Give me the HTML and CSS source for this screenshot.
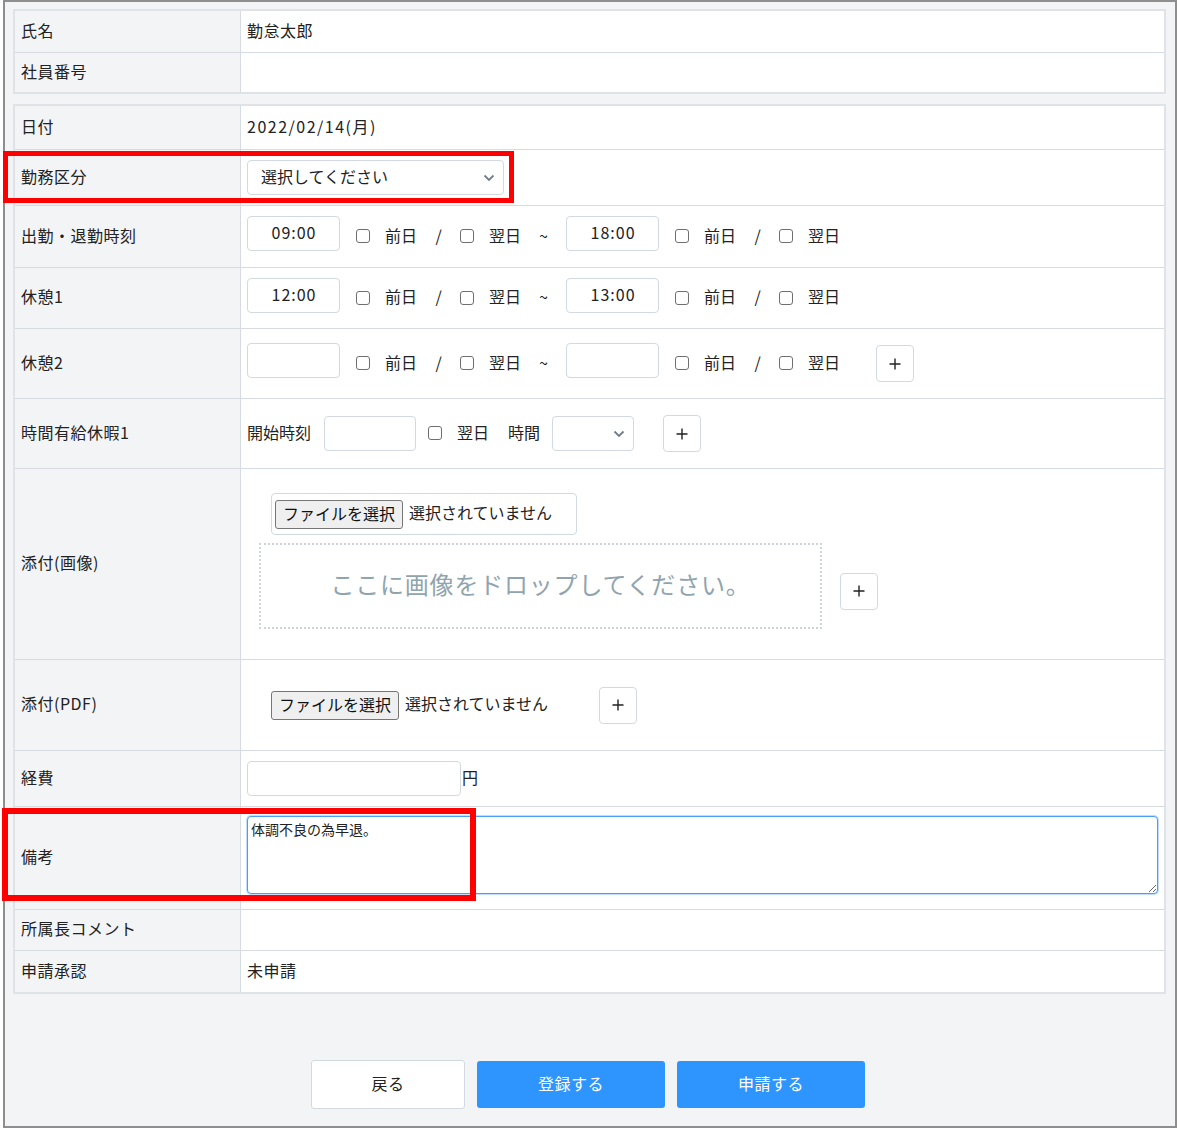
FILE: index.html
```html
<!DOCTYPE html>
<html lang="ja">

<head>
    <meta charset="UTF-8">
    <meta name="viewport" content="width=device-width, initial-scale=1.0">
    <title>勤怠申請</title>
    <link rel="stylesheet" href="styles.css">
</head>

<body>
    <div class="frame">
        <div class="table table-user">
            <div class="label">氏名</div>
            <div class="value text">勤怠太郎</div>
            <div class="label">社員番号</div>
            <div class="value"></div>
        </div>

        <div class="table table-form">
            <div class="label">日付</div>
            <div class="value text num">2022/02/14(月)</div>

            <div class="label">勤務区分</div>
            <div class="value">
                <div class="select select-wide">
                    <span>選択してください</span>
                    <svg class="chevron" width="12" height="8" viewBox="0 0 12 8"><polyline points="1.5,1.5 6,6 10.5,1.5" /></svg>
                </div>
            </div>

            <div class="label">出勤・退勤時刻</div>
            <div class="value">
                <input class="field time" type="text" value="09:00">
                <label class="day"><input class="check" type="checkbox">前日</label>
                <span class="sep">/</span>
                <label class="day"><input class="check" type="checkbox">翌日</label>
                <span class="tilde">~</span>
                <input class="field time" type="text" value="18:00">
                <label class="day"><input class="check" type="checkbox">前日</label>
                <span class="sep">/</span>
                <label class="day"><input class="check" type="checkbox">翌日</label>
            </div>

            <div class="label">休憩1</div>
            <div class="value">
                <input class="field time" type="text" value="12:00">
                <label class="day"><input class="check" type="checkbox">前日</label>
                <span class="sep">/</span>
                <label class="day"><input class="check" type="checkbox">翌日</label>
                <span class="tilde">~</span>
                <input class="field time" type="text" value="13:00">
                <label class="day"><input class="check" type="checkbox">前日</label>
                <span class="sep">/</span>
                <label class="day"><input class="check" type="checkbox">翌日</label>
            </div>

            <div class="label">休憩2</div>
            <div class="value">
                <input class="field time" type="text" value="">
                <label class="day"><input class="check" type="checkbox">前日</label>
                <span class="sep">/</span>
                <label class="day"><input class="check" type="checkbox">翌日</label>
                <span class="tilde">~</span>
                <input class="field time" type="text" value="">
                <label class="day"><input class="check" type="checkbox">前日</label>
                <span class="sep">/</span>
                <label class="day"><input class="check" type="checkbox">翌日</label>
                <button class="add add-break" type="button"><svg width="12" height="12" viewBox="0 0 12 12"><path d="M6 0.5V11.5M0.5 6H11.5" /></svg></button>
            </div>

            <div class="label">時間有給休暇1</div>
            <div class="value leave">
                <span class="word">開始時刻</span>
                <input class="field start" type="text" value="">
                <label class="day"><input class="check" type="checkbox">翌日</label>
                <span class="word hours">時間</span>
                <div class="select select-small">
                    <span></span>
                    <svg class="chevron" width="12" height="8" viewBox="0 0 12 8"><polyline points="1.5,1.5 6,6 10.5,1.5" /></svg>
                </div>
                <button class="add" type="button"><svg width="12" height="12" viewBox="0 0 12 12"><path d="M6 0.5V11.5M0.5 6H11.5" /></svg></button>
            </div>

            <div class="label">添付(画像)</div>
            <div class="value upload">
                <div class="file-box">
                    <div class="file">
                        <button class="file-btn" type="button">ファイルを選択</button>
                        <span class="word">選択されていません</span>
                    </div>
                </div>
                <div class="drop-row">
                    <div class="drop">ここに画像をドロップしてください。</div>
                    <button class="add" type="button"><svg width="12" height="12" viewBox="0 0 12 12"><path d="M6 0.5V11.5M0.5 6H11.5" /></svg></button>
                </div>
            </div>

            <div class="label">添付(PDF)</div>
            <div class="value pdf">
                <div class="file">
                    <button class="file-btn" type="button">ファイルを選択</button>
                    <span class="word">選択されていません</span>
                </div>
                <button class="add" type="button"><svg width="12" height="12" viewBox="0 0 12 12"><path d="M6 0.5V11.5M0.5 6H11.5" /></svg></button>
            </div>

            <div class="label">経費</div>
            <div class="value">
                <input class="field money" type="text" value="">
                <span class="word yen">円</span>
            </div>

            <div class="label">備考</div>
            <div class="value note-cell">
                <textarea class="note">体調不良の為早退。</textarea>
            </div>

            <div class="label">所属長コメント</div>
            <div class="value"></div>

            <div class="label">申請承認</div>
            <div class="value text">未申請</div>
        </div>

        <div class="actions">
            <button class="btn btn-back" type="button">戻る</button>
            <button class="btn btn-primary" type="button">登録する</button>
            <button class="btn btn-primary" type="button">申請する</button>
        </div>

        <div class="mark mark-kubun"></div>
        <div class="mark mark-note"></div>
    </div>
</body>

</html>
```

FILE: styles.css
```css
body {
    margin: 0;
    font-family: "Noto Sans CJK JP", "Noto Sans", sans-serif;
    font-size: 16px;
    color: #222;
    background: #fff;
}

.frame {
    position: relative;
    box-sizing: border-box;
    width: 1174px;
    height: 1128px;
    margin-left: 3px;
    padding: 7px 9px 0 8px;
    border: 2px solid #8e8e8e;
    background: #f3f4f6;
}

.table {
    display: grid;
    grid-template-columns: 226px 1fr;
    border: 2px solid #dfe3e8;
    background: #fff;
}

.table-user {
    grid-template-rows: 41px 40px;
}

.table-form {
    margin-top: 10px;
    grid-template-rows: 43px 56px 62px 61px 70px 70px 191px 91px 56px 103px 41px 42px;
}

.table > div {
    box-sizing: border-box;
}

.table > div:nth-child(n+3) {
    border-top: 1px solid #d5dbe1;
}

/* noto sits a little low, padding-bottom lifts the text back up */
.label {
    display: flex;
    align-items: center;
    padding: 0 0 4px 6px;
    background: #f3f4f6;
    border-right: 1px solid #d5dbe1;
    line-height: 1;
    letter-spacing: 0.5px;
}

.value {
    display: flex;
    align-items: center;
    padding-left: 6px;
    line-height: 1;
}

.value.text {
    padding-bottom: 4px;
    letter-spacing: 0.5px;
}

.value.num {
    letter-spacing: 1.5px;
}

.word,
.day,
.sep,
.tilde {
    padding-bottom: 4px;
}

/* inputs */
.field {
    box-sizing: border-box;
    height: 35px;
    margin: 0;
    padding: 0 0 3px 0;
    border: 1px solid #d3d9e0;
    border-radius: 4px;
    background: #fff;
    font: inherit;
    color: #222;
    outline: none;
}

.time {
    width: 93px;
    margin-bottom: 6px;
    text-align: center;
    letter-spacing: 1px;
    text-indent: 1px;
}

.start {
    width: 92px;
    margin-left: 13px;
}

.money {
    width: 214px;
}

.yen {
    margin-left: 1px;
}

.check {
    appearance: none;
    box-sizing: border-box;
    width: 14px;
    height: 14px;
    margin: 3px 15px 0 0;
    border: 1px solid #6f6f6f;
    border-radius: 3px;
    background: #fff;
}

.day {
    display: flex;
    align-items: center;
}

.time + .day {
    margin-left: 16px;
}

.sep {
    width: 43px;
    text-align: center;
}

.tilde {
    width: 45px;
    text-align: center;
}

.leave .day {
    margin-left: 12px;
}

.hours {
    margin-left: 19px;
}

/* select */
.select {
    box-sizing: border-box;
    display: flex;
    align-items: center;
    justify-content: space-between;
    height: 35px;
    padding: 0 8px 0 13px;
    border: 1px solid #d3d9e0;
    border-radius: 4px;
    background: #fff;
}

.select span {
    padding-bottom: 4px;
}

.select-wide {
    width: 257px;
}

.select-small {
    width: 82px;
    margin-left: 12px;
}

.chevron polyline {
    fill: none;
    stroke: #6f7d8b;
    stroke-width: 1.8;
}

/* plus buttons */
.add {
    box-sizing: border-box;
    display: flex;
    align-items: center;
    justify-content: center;
    width: 38px;
    height: 37px;
    margin: 0 0 0 29px;
    padding: 0;
    border: 1px solid #d3d9e0;
    border-radius: 4px;
    background: #fff;
}

.add path {
    stroke: #222;
    stroke-width: 1.4;
}

.add-break {
    margin-left: 36px;
}

/* attachments */
.upload {
    flex-direction: column;
    align-items: flex-start;
    padding: 24px 0 0 18px;
}

.file-box {
    box-sizing: border-box;
    display: flex;
    align-items: center;
    width: 306px;
    height: 42px;
    margin-left: 12px;
    padding-left: 3px;
    border: 1px solid #d3d9e0;
    border-radius: 4px;
    background: #fff;
}

.file {
    display: flex;
    align-items: center;
    gap: 6px;
}

.file-btn {
    box-sizing: border-box;
    height: 29px;
    margin: 0;
    padding: 0 7px 3px;
    border: 1px solid #767676;
    border-radius: 3px;
    background: #efefef;
    font: inherit;
    color: #111;
}

.drop-row {
    display: flex;
    align-items: center;
    margin-top: 8px;
}

.drop {
    box-sizing: border-box;
    display: flex;
    align-items: center;
    justify-content: center;
    width: 563px;
    height: 86px;
    padding: 0 0 4px 0;
    border: 2px dotted #cdd4db;
    font-size: 24px;
    letter-spacing: 0.8px;
    color: #90a4ae;
}

.drop-row .add {
    margin: 10px 0 0 18px;
}

.pdf {
    padding-left: 30px;
}

.pdf .add {
    margin-left: 51px;
}

/* note */
.note-cell {
    align-items: flex-start;
}

.note {
    box-sizing: border-box;
    width: 911px;
    height: 78px;
    margin: 9px 0 0 0;
    padding: 3px;
    border: 1px solid #4a9ff5;
    border-radius: 4px;
    box-shadow: 0 0 0 1px rgba(74, 159, 245, 0.35);
    font-family: inherit;
    font-size: 14px;
    line-height: 1.3;
    color: #222;
    outline: none;
}

/* footer buttons */
.actions {
    display: flex;
    justify-content: center;
    align-items: center;
    gap: 12px;
    margin-top: 66px;
    padding-right: 3px;
}

.btn {
    box-sizing: border-box;
    width: 188px;
    height: 47px;
    padding: 0 0 4px;
    border: 0;
    border-radius: 3px;
    font: inherit;
    letter-spacing: 0.5px;
}

.btn-back {
    width: 154px;
    height: 49px;
    border: 1px solid #d3d9e0;
    background: #fff;
    color: #222;
}

.btn-primary {
    background: #2d95fd;
    color: #fff;
}

/* red annotation boxes */
.mark {
    position: absolute;
    box-sizing: border-box;
    border: 5px solid #ff0000;
    pointer-events: none;
}

.mark-kubun {
    left: -2px;
    top: 149px;
    width: 511px;
    height: 52px;
}

.mark-note {
    left: -3px;
    top: 806px;
    width: 474px;
    height: 93px;
    border-width: 6px;
}
```
